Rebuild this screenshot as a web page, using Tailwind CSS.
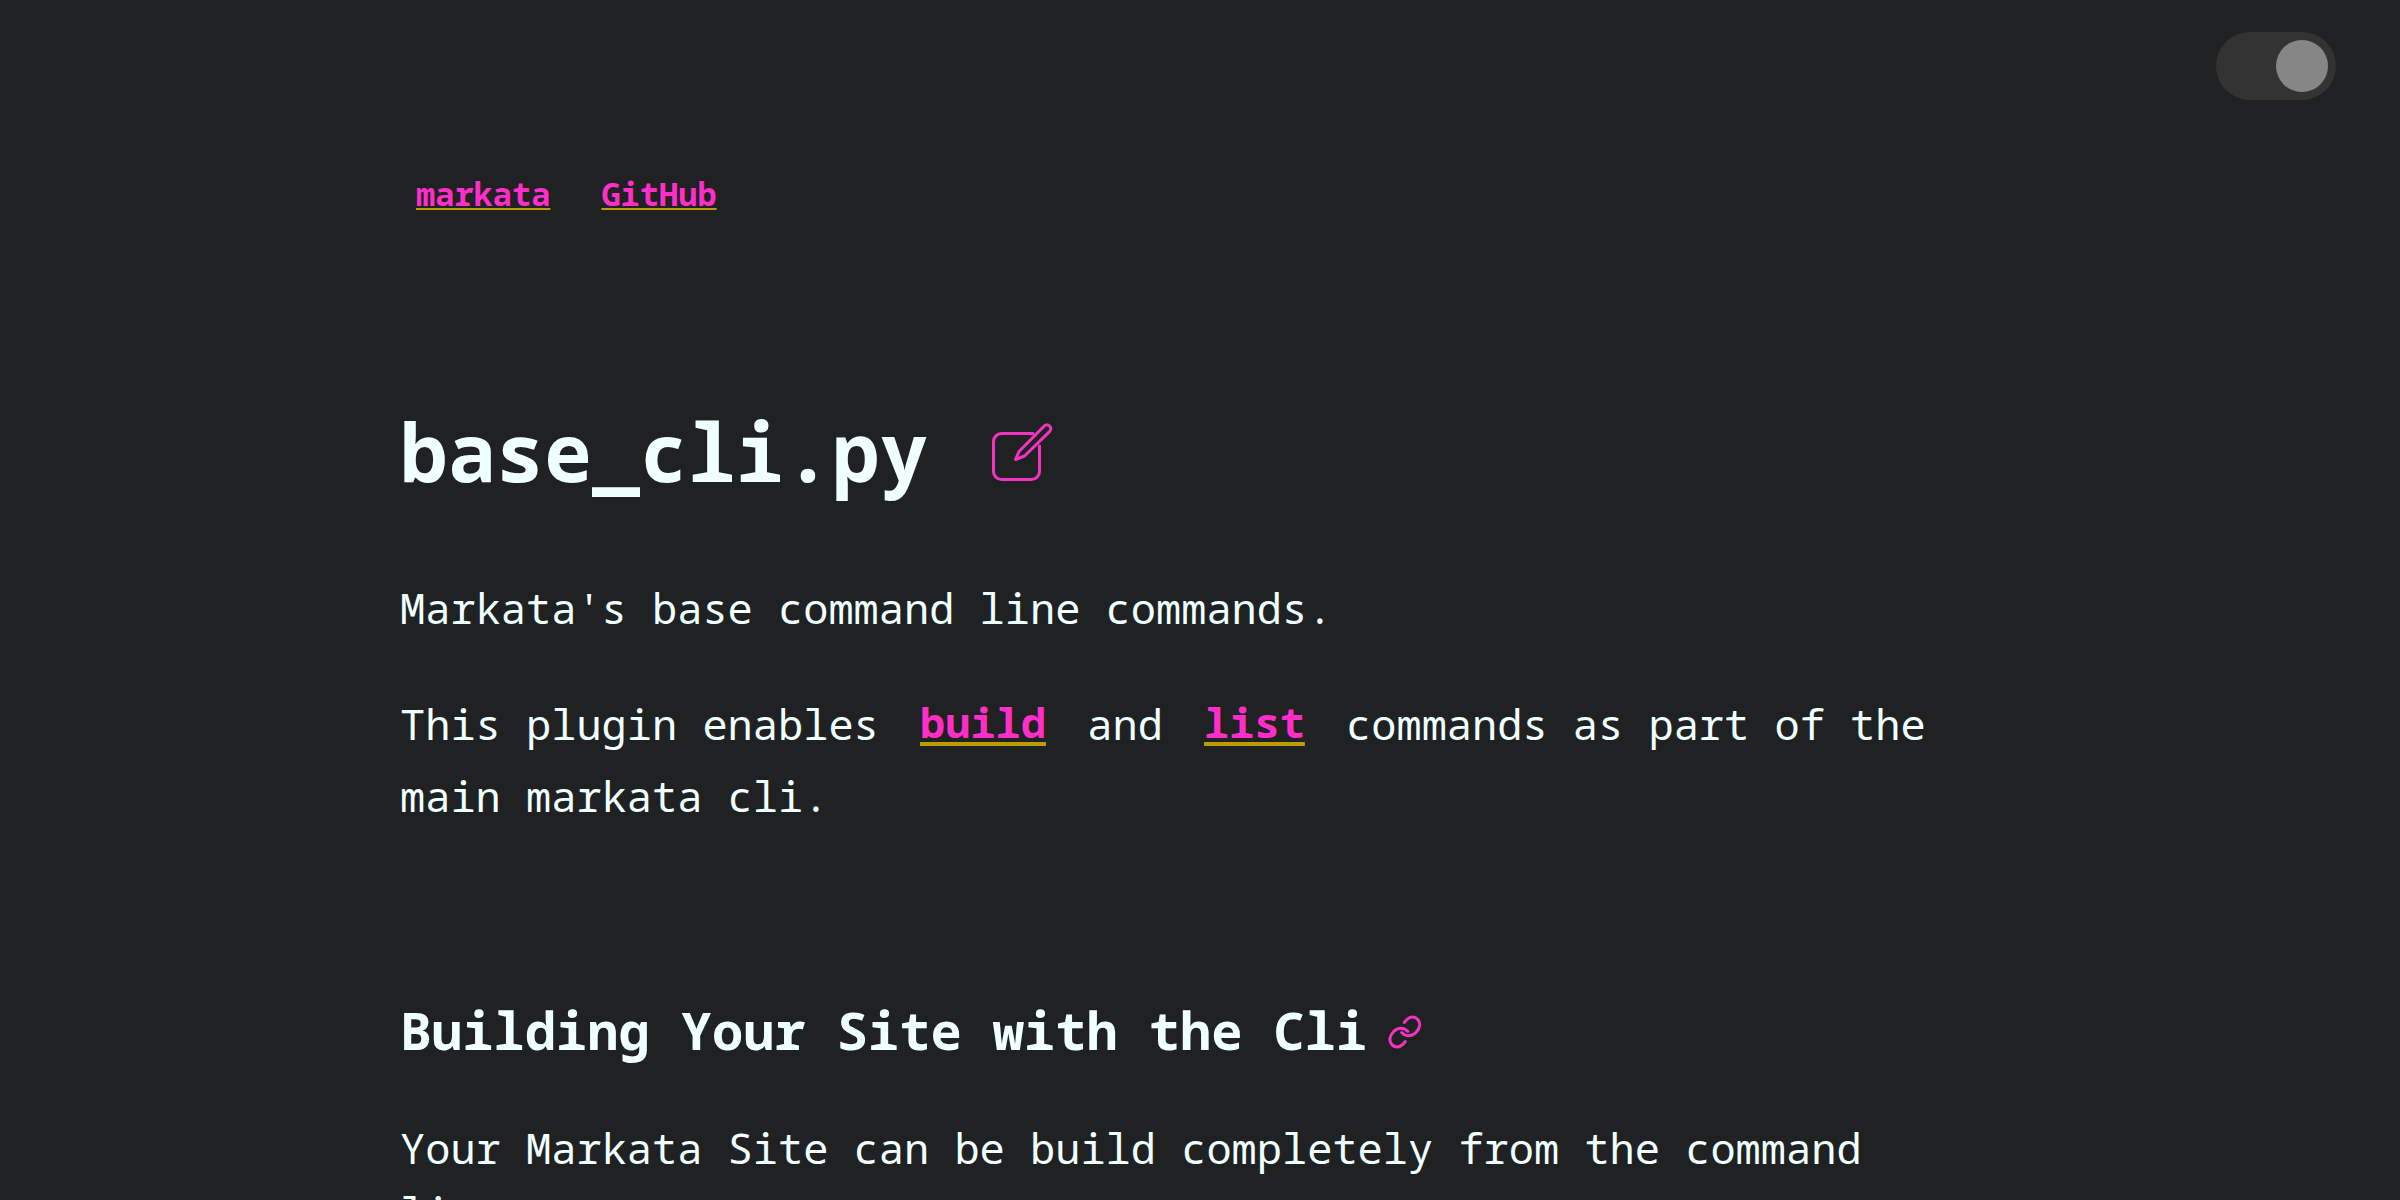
<!DOCTYPE html>
<html lang="en">
<head>
<meta charset="utf-8">
<meta name="viewport" content="width=device-width, initial-scale=1">
<title>base_cli.py</title>
<script src="https://cdn.jsdelivr.net/npm/@tailwindcss/browser@4"></script>
</head>
<body class="bg-[#1f2122] font-['Noto_Sans_Mono','DejaVu_Sans_Mono',monospace] text-[42px] leading-[64px] text-[#f0ffff]">
  <header class="flex h-[132px] items-start justify-end px-16 py-8">
    <input type="checkbox" checked aria-label="Dark theme" class="flex h-[68px] w-[120px] appearance-none items-center justify-start rounded-[34px] bg-[#333333] p-2 before:block before:size-[52px] before:rounded-full before:bg-[#868686] checked:justify-end">
  </header>
  <div class="mx-auto max-w-[1600px] pr-16">
    <nav class="flex gap-[51px] px-4 pt-[35px] text-[32px] leading-[54px] font-bold">
      <a href="#" class="text-[#ff2ec8] underline decoration-[#bd9b08] decoration-2 underline-offset-2">markata</a>
      <a href="#" class="text-[#ff2ec8] underline decoration-[#bd9b08] decoration-2 underline-offset-2">GitHub</a>
    </nav>
    <main>
      <h1 class="mt-[162px] flex items-center gap-[62px] text-[80px] leading-[136px] font-bold">
        base_cli.py
        <a href="#" aria-label="Edit" class="text-[#f433c1]">
          <svg class="h-[62px] w-16" viewBox="0 -2 64 62" fill="none" stroke="currentColor" stroke-width="3" stroke-linecap="round" stroke-linejoin="round">
            <path d="M43 11.5H11.5a8 8 0 0 0-8 8v30a8 8 0 0 0 8 8h30a8 8 0 0 0 8-8V24"/>
            <path d="M25.5 37.5L29 29.5L54 4.2C58 0.500 63 5.500 59.500 9.600L34.500 34Z"/>
          </svg>
        </a>
      </h1>
      <p class="mt-[57px]">Markata's base command line commands.</p>
      <p class="mt-[46px] leading-[72px]">This plugin enables <a href="#" class="px-4 align-[2px] font-bold text-[#ff2ec8]"><span class="underline decoration-[#bd9b08] decoration-4 underline-offset-4">build</span></a> and <a href="#" class="px-4 align-[2px] font-bold text-[#ff2ec8]"><span class="underline decoration-[#bd9b08] decoration-4 underline-offset-4">list</span></a> commands as part of the main markata cli.</p>
      <h2 class="mt-[154px] flex items-center gap-5 text-[52px] leading-[88px] font-bold">
        Building Your Site with the Cli
        <a href="#" aria-label="Link to this section" class="text-[#f433c1]">
          <svg class="h-[34px] w-9 overflow-visible" viewBox="0 -2 36 34" fill="none" stroke="currentColor" stroke-width="3" stroke-linecap="round" stroke-linejoin="round">
            <path d="M17.300 7.500C20 3.800 22.500 2.100 25.500 2.100C30 2.100 33.200 6.500 32.700 10.500C32 15 27.500 20.800 22 20.800C19 20.800 16.500 19.500 14.700 17.500"/>
            <path d="M18.300 26.500C15.600 30.200 13.100 31.900 10.100 31.900C5.600 31.900 2.400 27.500 2.900 23.500C3.600 19 8.100 13.200 13.600 13.200C16.600 13.200 19.100 14.500 20.900 16.500"/>
          </svg>
        </a>
      </h2>
      <p class="mt-[42px]">Your Markata Site can be build completely from the command line.</p>
    </main>
  </div>
</body>
</html>
